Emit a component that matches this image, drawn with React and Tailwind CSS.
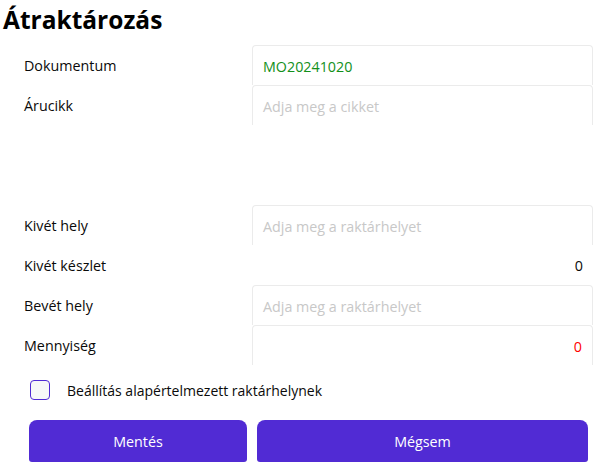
export default function App() {
  const font = { fontFamily: '"Open Sans", "Noto Sans", sans-serif' };
  const Box = ({ children, cls = "" }) => (
    <div className={`h-[40px] w-[341px] border-t border-x border-[#ebebeb] rounded-t-[4px] flex items-center px-[10px] pt-[2px] text-[14.3px] ${cls}`}>
      {children}
    </div>
  );
  const Label = ({ children }) => (
    <div className="w-[228px] h-[40px] flex items-center pt-[2px] text-[14.3px] text-[#0a0a0a]">{children}</div>
  );
  return (
    <div className="w-[611px] h-[472px] bg-white overflow-hidden" style={font}>
      <div className="pl-[3px] pt-[2px] h-[45px] text-[24.5px] font-bold text-black leading-[36px]">Átraktározás</div>
      <div className="pl-[24px]">
        <div className="flex">
          <Label>Dokumentum</Label>
          <Box cls="text-[#13901a]">MO20241020</Box>
        </div>
        <div className="flex h-[120px]">
          <Label>Árucikk</Label>
          <Box cls="text-[#c8c8c8]">Adja meg a cikket</Box>
        </div>
        <div className="flex">
          <Label>Kivét hely</Label>
          <Box cls="text-[#c8c8c8]">Adja meg a raktárhelyet</Box>
        </div>
        <div className="flex">
          <Label>Kivét készlet</Label>
          <div className="w-[341px] h-[40px] flex items-center justify-end pr-[10px] pt-[2px] text-[14.3px] text-[#0a0a0a]">0</div>
        </div>
        <div className="flex">
          <Label>Bevét hely</Label>
          <Box cls="text-[#c8c8c8]">Adja meg a raktárhelyet</Box>
        </div>
        <div className="flex">
          <Label>Mennyiség</Label>
          <Box cls="justify-end text-[#ff0000]">0</Box>
        </div>
      </div>
      <div className="flex items-center h-[50px] pl-[30px]">
        <div className="w-[20px] h-[20px] rounded-[4px] border-[1.5px] border-[#512bd4] bg-[#f8f8f8]"></div>
        <span className="ml-[17px] text-[14px] text-[#0a0a0a]">Beállítás alapértelmezett raktárhelynek</span>
      </div>
      <div className="flex pl-[29px] gap-[10px] pt-[5px]">
        <button className="w-[218px] h-[42px] pt-[2px] rounded-t-[8px] rounded-b-[3px] bg-[#512bd4] text-white text-[14.3px]">Mentés</button>
        <button className="w-[331px] h-[42px] pt-[2px] rounded-t-[8px] rounded-b-[3px] bg-[#512bd4] text-white text-[14.3px]">Mégsem</button>
      </div>
    </div>
  );
}
